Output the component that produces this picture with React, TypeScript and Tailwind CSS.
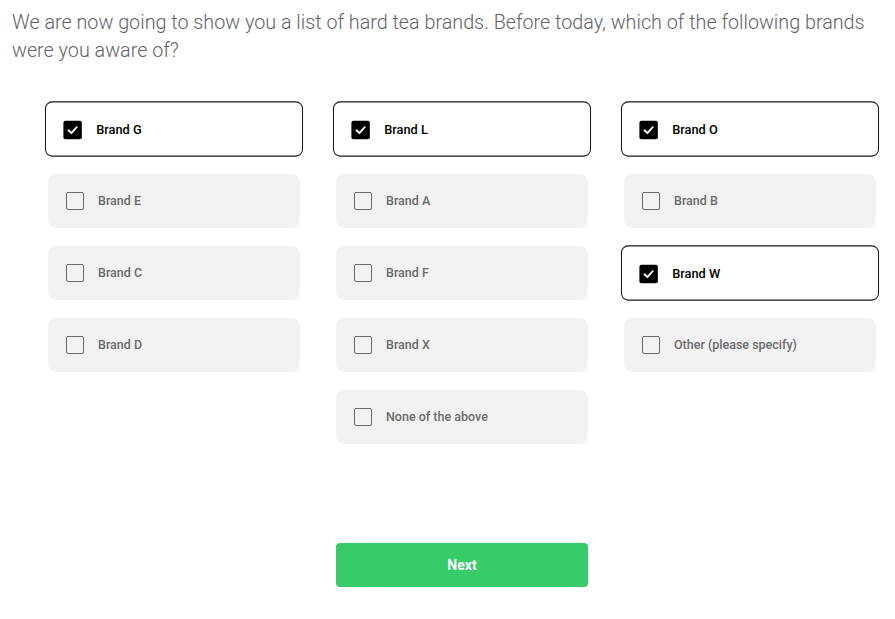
import React from "react";

type Item = { label: string; checked?: boolean };

const columns: Item[][] = [
  [
    { label: "Brand G", checked: true },
    { label: "Brand E" },
    { label: "Brand C" },
    { label: "Brand D" },
  ],
  [
    { label: "Brand L", checked: true },
    { label: "Brand A" },
    { label: "Brand F" },
    { label: "Brand X" },
    { label: "None of the above" },
  ],
  [
    { label: "Brand O", checked: true },
    { label: "Brand B" },
    { label: "Brand W", checked: true },
    { label: "Other (please specify)" },
  ],
];

function Option({ item }: { item: Item }) {
  if (item.checked) {
    return (
      <div className="h-[54px] w-[252px] scale-[1.024] rounded-[7px] border-[1.5px] border-[#1a1a1a] bg-white flex items-center pl-[17px] pt-[1px]">
        <div className="w-[18px] h-[18px] rounded-[2px] bg-black flex items-center justify-center">
          <svg width="12" height="12" viewBox="0 0 12 12" fill="none">
            <path d="M2 6.2 L4.8 9 L10 3.2" stroke="white" strokeWidth="1.8" strokeLinecap="round" strokeLinejoin="round" />
          </svg>
        </div>
        <span className="ml-[14px] pt-[1px] text-[12.5px] font-medium text-black">{item.label}</span>
      </div>
    );
  }
  return (
    <div className="h-[54px] w-[252px] rounded-[8px] bg-[#f2f2f2] flex items-center pl-[18px]">
      <div className="w-[18px] h-[18px] rounded-[2px] border-[1.5px] border-[#6b6b6b] bg-transparent" />
      <span className="ml-[14px] text-[12.5px] font-medium text-[#6b6b6b]">{item.label}</span>
    </div>
  );
}

export default function App() {
  return (
    <div
      className="w-[895px] h-[619px] bg-white"
      style={{ fontFamily: "Roboto, 'Liberation Sans', sans-serif" }}
    >
      <h1 className="pt-[9px] pl-[12px] pr-[4px] text-[19.75px] leading-[28px] font-light text-[#5f6368]">
        We are now going to show you a list of hard tea brands. Before today, which of the following brands were you aware of?
      </h1>
      <div className="mt-[37px] pl-[48px] flex gap-[36px] items-start">
        {columns.map((col, i) => (
          <div key={i} className="flex flex-col gap-[18px]">
            {col.map((item) => (
              <Option key={item.label} item={item} />
            ))}
          </div>
        ))}
      </div>
      <div className="mt-[99px] pl-[336px]">
        <button className="w-[252px] h-[44px] rounded-[4px] bg-[#37cb69] text-white text-[14px] font-bold">
          Next
        </button>
      </div>
    </div>
  );
}
